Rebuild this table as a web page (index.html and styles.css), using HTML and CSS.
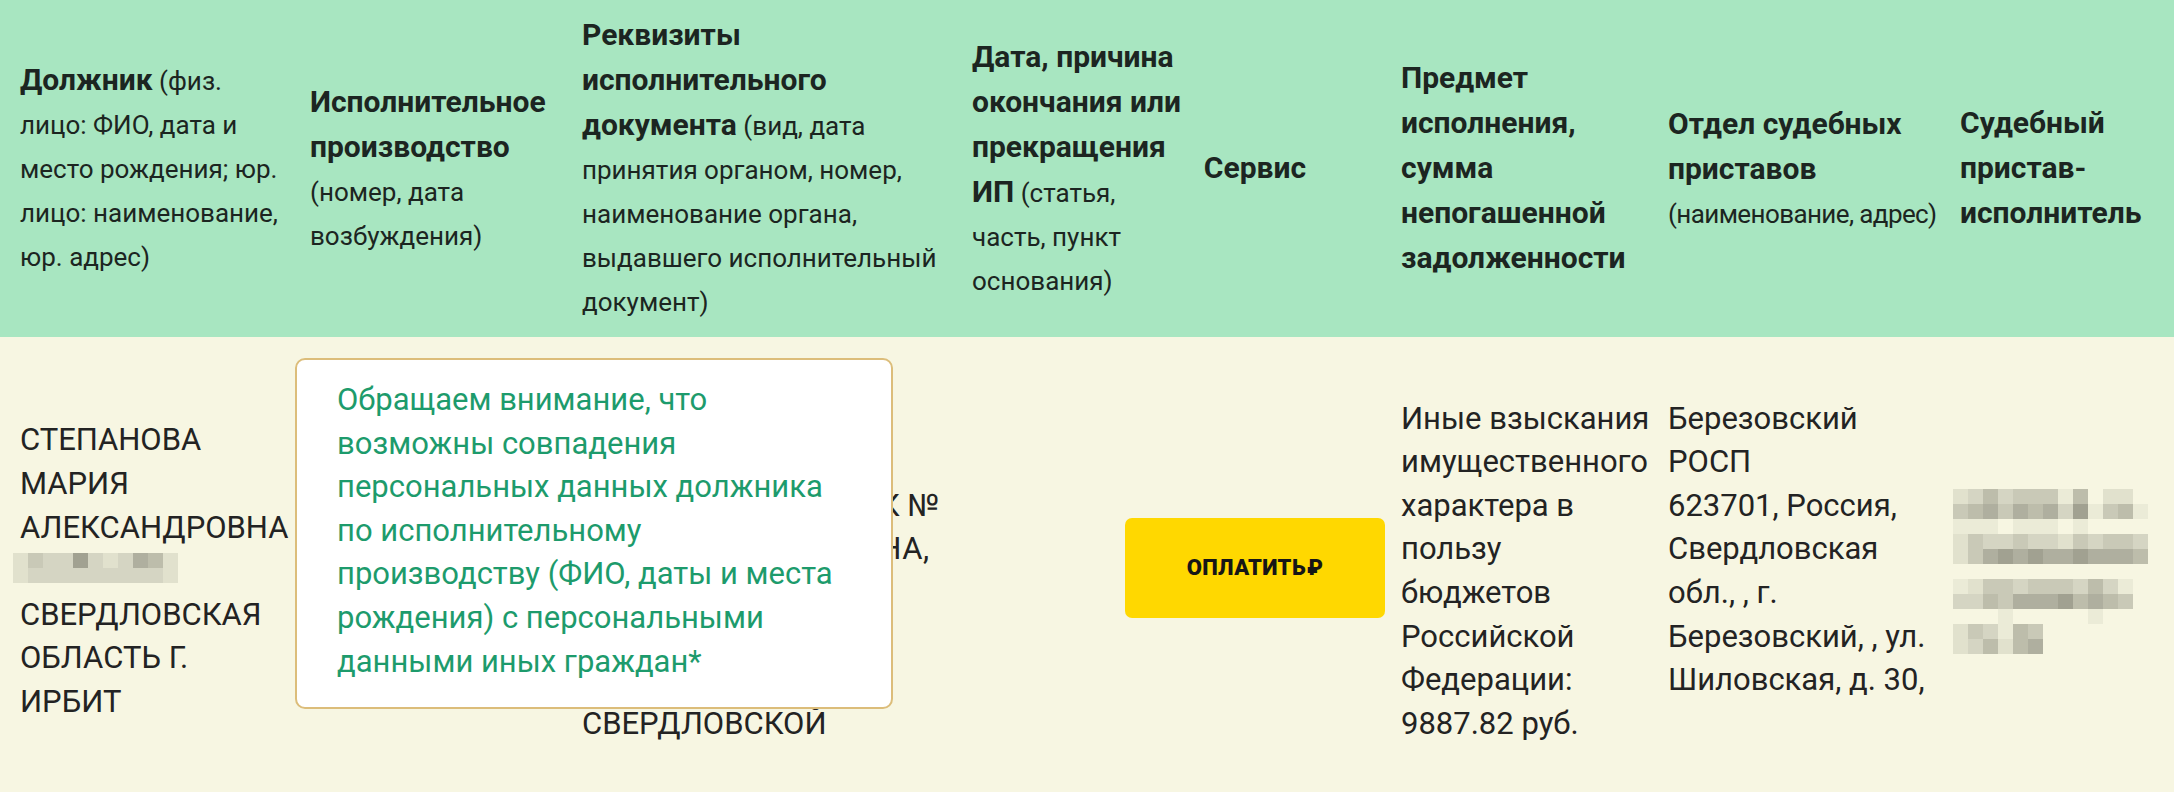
FILE: index.html
```html
<!DOCTYPE html>
<html lang="ru">
<head>
<meta charset="utf-8">
<title>Исполнительные производства</title>
<link rel="stylesheet" href="styles.css">
</head>
<body>
<div class="table">
  <div class="row head">
    <div class="cell"><div><b>Должник</b> (физ.<br>лицо: ФИО, дата и<br>место рождения; юр.<br>лицо: наименование,<br>юр. адрес)</div></div>
    <div class="cell"><div><b>Исполнительное<br>производство</b><br>(номер, дата<br>возбуждения)</div></div>
    <div class="cell"><div><b>Реквизиты<br>исполнительного<br>документа</b> (вид, дата<br>принятия органом, номер,<br>наименование органа,<br>выдавшего исполнительный<br>документ)</div></div>
    <div class="cell"><div><b>Дата, причина<br>окончания или<br>прекращения<br>ИП</b> (статья,<br>часть, пункт<br>основания)</div></div>
    <div class="cell service"><div><b>Сервис</b></div></div>
    <div class="cell"><div><b>Предмет<br>исполнения,<br>сумма<br>непогашенной<br>задолженности</b></div></div>
    <div class="cell"><div><b>Отдел судебных<br>приставов</b><br><span class="narrow">(наименование, адрес)</span></div></div>
    <div class="cell"><div><b>Судебный<br>пристав-<br>исполнитель</b></div></div>
  </div>

  <div class="row body-row">
    <div class="cell">
      <div>СТЕПАНОВА<br>МАРИЯ<br>АЛЕКСАНДРОВНА</div>
      <div class="dob">
        <div class="mosaic m11">
          <i class="t2"></i><i class="t4"></i><i class="t3"></i><i class="t3"></i><i class="t7"></i><i class="t3"></i><i class="t2"></i><i class="t3"></i><i class="t6"></i><i class="t5"></i><i class="t2"></i>
          <i class="t2"></i><i class="t3"></i><i class="t3"></i><i class="t3"></i><i class="t3"></i><i class="t3"></i><i class="t3"></i><i class="t3"></i><i class="t3"></i><i class="t3"></i><i class="t2"></i>
        </div>
      </div>
      <div>СВЕРДЛОВСКАЯ<br>ОБЛАСТЬ Г.<br>ИРБИТ</div>
    </div>
    <div class="cell"></div>
    <div class="cell"><div>СУДЕБНЫЙ ПРИКАЗ<br>от 18.06.2021<br>СУДЕБНЫЙ УЧАСТОК №<br><span class="wide">ИРБИТСКОГО РАЙОНА,</span><br>№ 2-1459/2021<br>МИРОВОЙ СУДЬЯ<br>ИРБИТСКОГО Р-НА<br>СВЕРДЛОВСКОЙ</div></div>
    <div class="cell"></div>
    <div class="cell service"><a class="pay" href="#">ОПЛАТИТЬ<span class="rub">₽</span></a></div>
    <div class="cell"><div>Иные взыскания<br>имущественного<br>характера в<br>пользу<br>бюджетов<br>Российской<br>Федерации:<br>9887.82 руб.</div></div>
    <div class="cell"><div>Березовский<br>РОСП<br>623701, Россия,<br>Свердловская<br>обл., , г.<br>Березовский, , ул.<br>Шиловская, д. 30,<br>&nbsp;</div></div>
    <div class="cell">
      <div class="mosaic m13">
        <i class="t2"></i><i class="t3"></i><i class="t5"></i><i class="t3"></i><i class="t4"></i><i class="t4"></i><i class="t4"></i><i class="t1"></i><i class="t5"></i><i></i><i class="t2"></i><i class="t2"></i><i></i>
        <i class="t4"></i><i class="t5"></i><i class="t6"></i><i class="t4"></i><i class="t6"></i><i class="t5"></i><i class="t6"></i><i class="t3"></i><i class="t7"></i><i class="t1"></i><i class="t4"></i><i class="t5"></i><i class="t1"></i>
        <i class="t1"></i><i class="t1"></i><i class="t1"></i><i></i><i class="t1"></i><i class="t1"></i><i class="t1"></i><i></i><i class="t1"></i><i></i><i></i><i></i><i></i>
        <i class="t2"></i><i class="t4"></i><i class="t3"></i><i class="t3"></i><i class="t4"></i><i class="t3"></i><i class="t3"></i><i class="t2"></i><i class="t4"></i><i class="t3"></i><i class="t4"></i><i class="t4"></i><i class="t3"></i>
        <i class="t2"></i><i class="t4"></i><i class="t6"></i><i class="t7"></i><i class="t6"></i><i class="t7"></i><i class="t6"></i><i class="t6"></i><i class="t7"></i><i class="t6"></i><i class="t6"></i><i class="t6"></i><i class="t5"></i>
        <i></i><i></i><i></i><i></i><i></i><i></i><i></i><i></i><i></i><i></i><i></i><i></i><i></i>
        <i class="t1"></i><i class="t2"></i><i class="t4"></i><i class="t4"></i><i class="t3"></i><i class="t4"></i><i class="t4"></i><i class="t4"></i><i class="t3"></i><i class="t5"></i><i class="t3"></i><i class="t1"></i><i></i>
        <i class="t3"></i><i class="t3"></i><i class="t5"></i><i class="t4"></i><i class="t6"></i><i class="t6"></i><i class="t6"></i><i class="t7"></i><i class="t5"></i><i class="t6"></i><i class="t5"></i><i class="t4"></i><i></i>
        <i></i><i></i><i></i><i class="t1"></i><i></i><i></i><i></i><i></i><i></i><i class="t1"></i><i></i><i></i><i></i>
        <i class="t2"></i><i class="t4"></i><i class="t3"></i><i class="t1"></i><i class="t5"></i><i class="t4"></i><i></i><i></i><i></i><i></i><i></i><i></i><i></i>
        <i class="t2"></i><i class="t3"></i><i class="t5"></i><i class="t2"></i><i class="t5"></i><i class="t6"></i><i></i><i></i><i></i><i></i><i></i><i></i><i></i>
      </div>
    </div>

    <div class="notice">Обращаем внимание, что<br>возможны совпадения<br>персональных данных должника<br>по исполнительному<br>производству (ФИО, даты и места<br>рождения) с персональными<br>данными иных граждан*</div>
  </div>
</div>
</body>
</html>
```

FILE: styles.css
```css
* { box-sizing: border-box; }

html, body {
  margin: 0;
  background: #f7f6e2;
}

body {
  font-family: Roboto, "Liberation Sans", sans-serif;
  color: #222222;
}

.table {
  width: 2174px;
}

.row {
  display: grid;
  grid-template-columns: 290px 272px 390px 238px 191px 267px 292px 234px;
}

.cell {
  display: flex;
  flex-direction: column;
  justify-content: center;
  padding: 0 0 0 20px;
  white-space: nowrap;
  min-width: 0;
}

.cell.service {
  align-items: center;
  text-align: center;
  padding: 0 61px 0 0;
}

/* header */
.head {
  height: 337px;
  background: #a8e6c1;
  color: #1c2521;
  font-size: 26px;
  line-height: 44px;
}

.head b {
  font-size: 30px;
  font-weight: 700;
}

.head .narrow {
  letter-spacing: -0.6px;
}

/* body row */
.body-row {
  position: relative;
  height: 468px;
  font-size: 31px;
  line-height: 43.6px;
  color: #232323;
}

.wide {
  letter-spacing: 0.6px;
}

.dob {
  height: 43.6px;
  padding-top: 4px;
  margin-left: -7px;
}

.mosaic {
  display: grid;
  grid-auto-rows: 15px;
}

.mosaic.m11 { grid-template-columns: repeat(11, 15px); }
.mosaic.m13 { grid-template-columns: repeat(13, 15px); margin-left: -7px; }

.mosaic i { display: block; }
.t1 { background: #ebebd7; }
.t2 { background: #e1e1cd; }
.t3 { background: #d5d5c3; }
.t4 { background: #c9c9b7; }
.t5 { background: #bdbdab; }
.t6 { background: #afaf9f; }
.t7 { background: #a1a191; }

.pay {
  flex: none;
  display: flex;
  align-items: center;
  justify-content: center;
  width: 260px;
  height: 100px;
  margin-bottom: 6px;
  background: #ffd800;
  border-radius: 7px;
  color: #161616;
  text-decoration: none;
  font-size: 22px;
  font-weight: 900;
  line-height: 1;
  letter-spacing: 0.3px;
}

.rub {
  margin-left: 1px;
}

.notice {
  position: absolute;
  left: 295px;
  top: 21px;
  width: 598px;
  height: 351px;
  padding: 18px 0 0 40px;
  background: #ffffff;
  border: 2px solid #dcbd7a;
  border-radius: 10px;
  color: #1d9b6c;
  font-size: 31px;
  line-height: 43.6px;
  white-space: nowrap;
}
```
